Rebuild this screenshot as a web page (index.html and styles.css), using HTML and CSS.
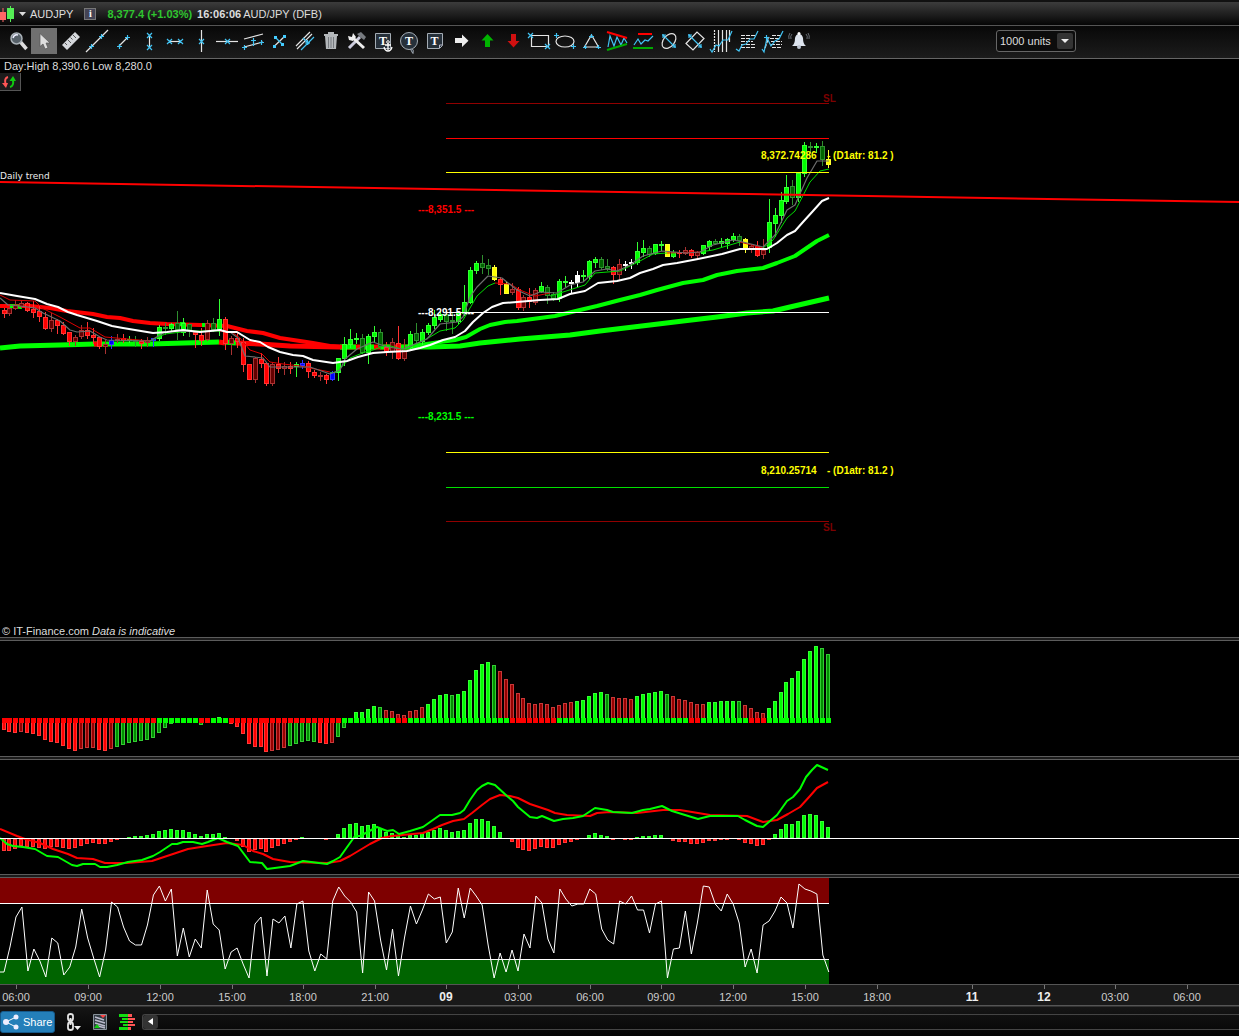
FILE: index.html
```html
<!DOCTYPE html>
<html lang="en">
<head>
    <meta charset="UTF-8">
    <meta name="viewport" content="width=device-width, initial-scale=1.0">
    <title>AUDJPY chart</title>
    <link rel="stylesheet" href="styles.css">
</head>
<body>
    <!-- Instrument header -->
    <header class="title-bar">
        <svg class="logo" width="15" height="20" viewBox="0 0 15 20">
            <path d="M3 4v14" stroke="#f66"/><rect x="0" y="8" width="6" height="8" fill="#f66"/>
            <path d="M10.500 2v16" stroke="#5e5"/><rect x="7" y="4" width="7" height="11" fill="#5e5"/>
        </svg>
        <svg class="caret" width="7" height="4" viewBox="0 0 7 4"><path d="M0 0h7L3.500 4z" fill="#ddd"/></svg>
        <span class="symbol">AUDJPY</span>
        <button class="info" aria-label="Information">i</button>
        <strong class="price">8,377.4 (+1.03%)</strong>
        <strong class="clock">16:06:06</strong>
        <span>AUD/JPY (DFB)</span>
    </header>

    <!-- Drawing tools -->
    <nav class="toolbar">
        <button class="tool" aria-label="Zoom"><svg viewBox="0 0 26 26"><path d="M15.500 14l6 7" stroke="#ddd" stroke-width="3.500"/><circle cx="11.500" cy="10.500" r="5.500" fill="#566068" stroke="#aab2b8" stroke-width="1.500"/><path d="M8 10q1-4 5-3" stroke="#eef" stroke-width="1.500"/></svg></button>
        <button class="tool active" aria-label="Select"><svg viewBox="0 0 26 26"><path d="M9 5.500v13l3-2.500 2 5 3-1-2-5h4z" fill="#ddd" stroke="#555" stroke-width=".7"/></svg></button>
        <button class="tool" aria-label="Measure"><svg viewBox="0 0 26 26"><path d="M5 17L18 4l5 5-13 13z" fill="#d5d8dc"/><path d="M8 15l2 2M11 12l3 3M13.500 9.500l2 2M16 7l3 3" stroke="#555"/></svg></button>
        <button class="tool" aria-label="Line"><svg viewBox="0 0 26 26"><path class="w" d="M3 24L25 2"/><path class="c" d="M6 18.500h5M8.500 16v5M16 8.500h5M18.500 6v5"/></svg></button>
        <button class="tool" aria-label="Segment"><svg viewBox="0 0 26 26"><path class="w" d="M10 18l9-9"/><path class="c" d="M8 18.500h5M10.500 16v5M16 9.500h5M18.500 7v5"/></svg></button>
        <button class="tool" aria-label="Vertical segment"><svg viewBox="0 0 26 26"><path class="w" d="M14.500 7v13"/><path class="c" d="M12 5l5 5M17 5l-5 5M12 17l5 5M17 17l-5 5"/></svg></button>
        <button class="tool" aria-label="Horizontal segment"><svg viewBox="0 0 26 26"><path class="w" d="M8 13.500h12"/><path class="c" d="M6 11l5 5M11 11l-5 5M17 11l5 5M22 11l-5 5"/></svg></button>
        <button class="tool" aria-label="Vertical line"><svg viewBox="0 0 26 26"><path class="w" d="M14.500 2v22"/><path class="c" d="M12 11l5 5M17 11l-5 5"/></svg></button>
        <button class="tool" aria-label="Horizontal line"><svg viewBox="0 0 26 26"><path class="w" d="M3 13.500h22"/><path class="c" d="M12 11l5 5M17 11l-5 5"/></svg></button>
        <button class="tool" aria-label="Channel"><svg viewBox="0 0 26 26"><path class="w" d="M5 11l19-5M5 19l19-5"/><path class="c" d="M3 19.500h5M5.500 17v5M20 14.500h5M22.500 12v5M14.500 10v8M12 12.500h5"/></svg></button>
        <button class="tool" aria-label="Perpendicular"><svg viewBox="0 0 26 26"><path class="w" d="M9 18.500L20 8"/><path class="c" d="M10 9l8 8"/><path d="M8 17h3v3H8zM18 7h3v3h-3zM9 8h3v3H9zM16 15h3v3h-3z" fill="#4cf"/></svg></button>
        <button class="tool" aria-label="Parallels"><svg viewBox="0 0 26 26"><path class="w" d="M5 18L19 4M6 21L21 6"/><path class="c" d="M10 22L23 9M12 10l6 6M14 15h5M16.500 12v5"/></svg></button>
        <button class="tool" aria-label="Delete"><svg viewBox="0 0 26 26"><path d="M8 8h12l-1 13H9zM7 6h14v2H7zM11 4h6v2h-6z" fill="#b4b8bb"/><path d="M11.500 9v11M14 9v11M16.500 9v11" stroke="#777b80"/></svg></button>
        <button class="tool" aria-label="Settings"><svg viewBox="0 0 26 26"><path d="M6 20L17 9" stroke="#ccd" stroke-width="3"/><path d="M9 9l12 11" stroke="#eee" stroke-width="3"/><path d="M5 8l4 1 1-4 3 4-3 4-4-1z" fill="#eee"/><path d="M14 6l4-2 5 5-2 3-4-3z" fill="#777b80"/></svg></button>
        <button class="tool" aria-label="Anchored text"><svg viewBox="0 0 26 26"><path class="box" d="M6.500 5.500h15v15h-15z"/><text class="t" x="14" y="17">T</text><path d="M19 14v8M16 17h6M15 19q1 4 4 4t4-4" stroke="#fff" stroke-width="1.300"/><circle cx="19" cy="14" r="1.300" fill="#222" stroke="#fff"/></svg></button>
        <button class="tool" aria-label="Bubble"><svg viewBox="0 0 26 26"><path class="box" d="M17 20.500q2 1 1 5-1-1-2.500-4.500"/><circle class="box" cx="14" cy="13" r="8.500"/><text class="t" x="14" y="17">T</text></svg></button>
        <button class="tool" aria-label="Note"><svg viewBox="0 0 26 26"><path class="box" d="M6.500 5.500h15v12l-3 3h-12z"/><path d="M18.500 20v-3h3" stroke="#bbc"/><text class="t" x="13.500" y="17">T</text></svg></button>
        <button class="tool" aria-label="Right arrow"><svg viewBox="0 0 26 26"><path d="M8 10h7V6.500l6.500 6.200-6.500 6.200V15H8z" fill="#eee"/></svg></button>
        <button class="tool" aria-label="Up arrow"><svg viewBox="0 0 26 26"><path d="M14.500 6l6 6.500h-3.500V19h-5v-6.500H8.500z" fill="#00b400"/></svg></button>
        <button class="tool" aria-label="Down arrow"><svg viewBox="0 0 26 26"><path d="M14.500 19.500l6-6.500h-3.500V6h-5v7H8.500z" fill="#d01010"/></svg></button>
        <button class="tool" aria-label="Rectangle"><svg viewBox="0 0 26 26"><path class="w" d="M6.500 7.500h17v11h-17z"/><path class="c" d="M3 5l5 5M8 5l-5 5M20 16l5 5M25 16l-5 5"/></svg></button>
        <button class="tool" aria-label="Ellipse"><svg viewBox="0 0 26 26"><ellipse class="w" cx="14" cy="13.500" rx="9" ry="5.500"/><path class="c" d="M3 7.500h5M5.500 5v5M20 18.500h5M22.500 16v5"/></svg></button>
        <button class="tool" aria-label="Triangle"><svg viewBox="0 0 26 26"><path class="w" d="M14.500 7l7 12h-14z"/><path class="c" d="M12 8.500h5M14.500 6v4M6 19.500h4M8.500 17v4M19 19.500h5M21.500 17v4"/></svg></button>
        <button class="tool" aria-label="Pattern"><svg viewBox="0 0 26 26"><path class="c" d="M5 19l2-11 4 10 3-9 4 8 3-7 3 5"/><path class="red" d="M4 4l20 6"/><path class="green" d="M4 22l20-6"/></svg></button>
        <button class="tool" aria-label="Support and resistance"><svg viewBox="0 0 26 26"><path class="c" d="M5 17l4-6 3 5 4-4 3 1 5-5"/><path class="red" d="M9 6h14"/><path class="green" d="M4 20h20"/></svg></button>
        <button class="tool" aria-label="Rotated ellipse"><svg viewBox="0 0 26 26"><ellipse class="w" cx="14" cy="13" rx="8.500" ry="5.500" transform="rotate(-50 14 13)"/><path class="c" d="M8 7l12 12M7 7h4M8 6v4M17 19h4M20 16v4"/></svg></button>
        <button class="tool" aria-label="Rotated rectangle"><svg viewBox="0 0 26 26"><path class="w" d="M5 15.500L16 4l7 6.500L12 22z"/><path class="c" d="M8 7l12 12M7 7h4M8 6v4M17 19h4M20 16v4"/></svg></button>
        <button class="tool" aria-label="Time cycles"><svg viewBox="0 0 26 26"><path class="w" d="M7.500 2v22" stroke-dasharray="2 1"/><path class="w" d="M11.500 2v22M15.500 2v22M19.500 2v22M22.500 2v12"/><path class="c" d="M3 21l2 3 4-7 3 1 4-6 5 0 4-9"/></svg></button>
        <button class="tool" aria-label="Retracements"><svg viewBox="0 0 26 26"><path class="w" d="M8 7.500h14M8 10.500h10M8 13.500h12M8 16.500h14M8 19.500h14" stroke-dasharray="4 1"/><path class="c" d="M3 21l3 2 3-6 4-1 4-5 4 0 4-8"/></svg></button>
        <button class="tool" aria-label="Extensions"><svg viewBox="0 0 26 26"><path class="w" d="M6 20l4-11M13 7.500h10M11 10.500h10M12 13.500h11M12 16.500h11M13 19.500h10" stroke-dasharray="4 1"/><path class="c" d="M3 21l2 3 3-14 4 8 4-5 4-2 4-8M5 9.500h5M7.500 7v5"/></svg></button>
        <button class="tool" aria-label="Alerts"><svg viewBox="0 0 26 26"><path d="M7 18q3-2 3-8 1-4 4-4t4 4q0 6 3 8z" fill="#dde4ee"/><circle cx="14" cy="19" r="2" fill="#bcc4d0"/><circle cx="14" cy="5.500" r="1.500" fill="#fff"/><path d="M7 6q-2 2-1 5M21 6q2 2 1 5M5 5q-2 3-1 6M23 5q2 3 1 6" stroke="#666c74"/></svg></button>
        <div class="units">
            <select aria-label="Units shown">
                <option>1000 units</option>
            </select>
            <svg class="units-arrow" width="16" height="16" viewBox="0 0 16 16"><path d="M4 6h8l-4 4z" fill="#eee"/></svg>
        </div>
    </nav>

    <!-- Chart panels, filled by chart.js -->
    <main>
        <section class="panel">
            <svg id="price" class="plot plot-price"></svg>
            <div class="panel-top">
                <span class="day-range">Day:High 8,390.6 Low 8,280.0</span>
                <button class="swap" aria-label="Buy or sell">
                    <svg width="16" height="14" viewBox="0 0 16 14"><path d="M7 2Q3 3 4.500 9" stroke="#f55" stroke-width="2"/><path d="M1 8h6l-2 5z" fill="#f55"/><path d="M9 12q4-1 3-7" stroke="#1c1" stroke-width="2"/><path d="M8.500 6h6.500l-3-5z" fill="#1c1"/></svg>
                </button>
            </div>
            <div class="copyright">© IT-Finance.com <em>Data is indicative</em></div>
        </section>
        <div class="divider"></div>
        <section class="panel"><svg id="histogram" class="plot plot-histogram"></svg></section>
        <div class="divider"></div>
        <section class="panel"><svg id="macd" class="plot plot-macd"></svg></section>
        <div class="divider"></div>
        <section class="panel"><svg id="stochastic" class="plot plot-stochastic"></svg></section>
        <svg id="axis" class="plot plot-axis"></svg>
    </main>

    <footer class="bottom-bar">
        <button class="share">
            <svg width="16" height="16" viewBox="0 0 16 16"><path d="M13 3L3 8l10 5" stroke="#fff"/><circle cx="13" cy="3" r="2.500" fill="#eef"/><circle cx="3" cy="8" r="3" fill="#eef"/><circle cx="13" cy="13" r="2.500" fill="#eef"/></svg>
            Share
        </button>
        <button class="icon" aria-label="Link"><svg width="16" height="18" viewBox="0 0 16 18"><path d="M3 6V3q0-2 2.500-2T8 3v3M3 5q0 3 2.500 3T8 5M3 12q0-3 2.500-3T8 12v3q0 2-2.500 2T3 15v-3M5.500 5v7" stroke="#e4e4e4" stroke-width="1.800"/><path d="M9 13h7l-3.500 4z" fill="#eee"/></svg></button>
        <button class="icon" aria-label="Orders list"><svg width="14" height="16" viewBox="0 0 14 16"><path d="M.5.5h13v15H.5z" fill="#333c44" stroke="#88929a"/><path d="M2 3l9 3M2 6l10 3M2 9l10 3M5 12l7 2" stroke="#bbc" stroke-width="1.500"/><path d="M7 1h6l-3 3z" fill="#f44"/><path d="M1 14l3-4 3 4z" fill="#1c1"/></svg></button>
        <button class="icon" aria-label="Order book"><svg width="16" height="16" viewBox="0 0 16 16"><path d="M0 0h9v3H0zM3 4h6v2H3zM1 7h8v2H1zM4 10h5v2H4zM0 13h9v3H0z" fill="#1d1"/><path d="M9 0h4v3H9zM9 4h7v2H9zM9 7h5v2H9zM9 10h7v2H9zM9 13h3v3H9z" fill="#f55"/></svg></button>
        <div class="scroller">
            <button class="scroll-left" aria-label="Scroll left"><svg width="5" height="7" viewBox="0 0 5 7"><path d="M5 0v7L0 3.500z" fill="#fff"/></svg></button>
        </div>
    </footer>
    <script src="chart.js"></script>
</body>
</html>
```
FILE: styles.css
```css
* {
    box-sizing: border-box;
}
body {
    margin: 0;
    min-height: 100vh;
    background: #000;
    color: #ddd;
    font: 11px/14px "Liberation Sans", Arial, sans-serif;
    overflow-x: hidden;
}
svg {
    display: block;
    fill: none;
}
button {
    margin: 0;
    padding: 0;
    border: 0;
    background: none;
    color: inherit;
    font: inherit;
}

/* header */
.title-bar {
    display: flex;
    align-items: center;
    height: 26px;
    border-top: 2px solid #111;
    border-bottom: 1px solid #555;
    background: linear-gradient(#3c3c3c, #050505);
    white-space: nowrap;
}
.caret {
    margin: 0 4px;
}
.info {
    width: 12px;
    height: 12px;
    margin: 0 11px;
    border: 1px solid #777;
    background: #445;
    color: #fff;
    font: bold 10px/10px "Liberation Serif", serif;
}
.price {
    color: #2fc52f;
    margin-right: 5px;
}
.clock {
    margin-right: 2px;
}

/* drawing tools */
.toolbar {
    display: flex;
    align-items: center;
    height: 33px;
    padding: 0 5px 2px;
    border-bottom: 1px solid #666;
    background: linear-gradient(#080808, #1c1c1c);
}
.tool {
    width: 26px;
    height: 26px;
    flex-shrink: 0;
}
.tool.active {
    background: #707070;
}
.tool .w {
    stroke: #e4e4e4;
    stroke-width: 1.2px;
}
.tool .c {
    stroke: #42c4f4;
    stroke-width: 1.2px;
}
.tool .red {
    stroke: #f00;
    stroke-width: 2px;
}
.tool .green {
    stroke: #0a0;
    stroke-width: 2px;
}
.tool .box {
    fill: #26303a;
    stroke: #a4acb4;
}
.tool .t {
    fill: #fff;
    font: bold 12px "Liberation Serif", serif;
    text-anchor: middle;
}
.units {
    position: relative;
    margin-left: 185px;
}
.units select {
    appearance: none;
    width: 80px;
    height: 22px;
    padding: 0 3px;
    border: 1px solid #666;
    border-radius: 3px;
    background: #0c0c0c;
    color: #ddd;
    font: inherit;
}
.units-arrow {
    position: absolute;
    top: 3px;
    right: 3px;
    background: #333;
    border-radius: 2px;
    pointer-events: none;
}

/* chart panels */
.panel {
    position: relative;
}
.plot {
    width: 100%;
}
.plot-price {
    height: 578px;
}
.plot-histogram {
    height: 115px;
}
.plot-macd {
    height: 114px;
}
.plot-stochastic {
    height: 106px;
}
.plot-axis {
    height: 22px;
    background: #191919;
    border-top: 1px solid #555;
    border-bottom: 1px solid #555;
}
.divider {
    height: 4px;
    border-top: 1px solid #5c5c5c;
    border-bottom: 1px solid #5c5c5c;
    background: #1b1b1b;
}
.panel-top {
    position: absolute;
    top: 0;
    left: 0;
}
.day-range {
    display: block;
    padding-left: 4px;
}
.swap {
    display: block;
    width: 21px;
    height: 18px;
    padding-left: 1px;
    border: solid #555;
    border-width: 0 1px 1px 0;
    background: #1c1c1c;
}
.copyright {
    position: absolute;
    bottom: 0;
    left: 2px;
    line-height: 12px;
}
.candle, .bars {
    shape-rendering: crispEdges;
}
.level-text {
    font: bold 10px "Liberation Sans", Arial, sans-serif;
}
.trend-text {
    font: 9px "DejaVu Sans", sans-serif;
    fill: #eee;
}
.axis-text {
    font: 11px "Liberation Sans", Arial, sans-serif;
    fill: #ccc;
    text-anchor: middle;
}
.axis-text.day {
    font-size: 12px;
    font-weight: bold;
    fill: #eee;
}

/* footer */
.bottom-bar {
    display: flex;
    align-items: center;
    height: 30px;
    background: linear-gradient(#151515, #050505);
    border-top: 1px solid #333;
}
.share {
    display: flex;
    align-items: center;
    gap: 4px;
    height: 22px;
    padding: 0 2px;
    margin-right: 10px;
    border: 1px solid #15598a;
    border-radius: 3px;
    background: #247fb9;
    color: #fff;
}
.icon {
    margin-right: 12px;
}
.scroller {
    flex: 1;
    margin-left: -5px;
    border: 1px solid #444;
    border-right: 0;
    border-radius: 3px 0 0 3px;
}
.scroll-left {
    display: flex;
    align-items: center;
    justify-content: center;
    width: 15px;
    height: 14px;
    border-radius: 3px;
    background: #333;
}
```
FILE: chart.js
```js
const NS = "http://www.w3.org/2000/svg";
const STEP = 5.977;
const LAST_X = 829;

// [fill, border]
const COLORS = {
    g: ["#00ff00", "#33ff33"],
    G: ["#006400", "#2f8f2f"],
    r: ["#ff0000", "#ff3333"],
    R: ["#640000", "#a83232"],
    y: ["#ffff00", "#ffff33"],
    w: ["#ffffff", "#ffffff"],
    b: ["#0000ff", "#3333ff"]
};

function add(parent, tag, attrs, text) {
    const el = document.createElementNS(NS, tag);
    for (const key in attrs) el.setAttribute(key, attrs[key]);
    if (text) el.textContent = text;
    parent.appendChild(el);
    return el;
}

// group whose y values count from the given window height
function plot(id, top) {
    return add(document.getElementById(id), "g", { transform: `translate(0,${-top})` });
}

function barX(i) {
    return Math.floor(4 + i * STEP);
}

function line(parent, points, color, width) {
    add(parent, "polyline", { points: points, stroke: color, "stroke-width": width, "stroke-linejoin": "round" });
}

function level(parent, x1, x2, y, color) {
    add(parent, "rect", { x: x1, y: y, width: x2 - x1, height: 1, fill: color });
}

// colour, high, body top, body bottom, low
const candles = `r308,310,313,317 R307,308,313,315 R300,305,308,309 R300,303,306,307 r302,303,310,311 r301,309,312,317
r306,311,316,321 r312,317,328,329 R313,320,328,331 r319,320,325,333 r322,325,333,334 r332,332,341,345 R335,337,341,345
R325,330,336,338 r322,330,335,338 r328,335,337,343 r337,337,346,348 R340,344,346,353 b336,340,344,348 R334,339,340,342
r334,338,340,342 g336,339,340,342 G336,340,341,346 r339,341,343,348 R337,340,342,346 b338,338,340,346 g325,327,338,340
G323,327,328,334 g323,324,328,330 G311,323,329,339 g318,323,332,335 G323,324,330,336 r331,332,334,347 r328,335,340,345
R320,323,339,340 G318,323,329,331 g299,319,329,335 r317,319,343,349 R336,338,343,354 r332,338,341,347 r338,342,364,371
r364,364,379,379 R357,358,379,382 r353,359,363,367 r362,363,383,385 R362,364,383,385 r357,364,368,372 R362,366,368,374
r362,366,368,373 g362,364,366,376 b360,363,365,368 r361,363,371,377 r370,372,375,377 R372,375,376,380 r374,375,379,383
b371,372,379,380 g358,358,372,380 g337,344,358,365 g329,339,344,347 g333,338,339,343 G334,338,352,353 g334,336,352,363
g326,332,336,341 G329,332,346,348 r342,347,351,355 R338,342,351,358 r326,343,358,359 R339,349,358,360 g331,334,347,350
G323,333,340,342 g329,332,341,344 g323,325,332,334 g310,317,325,328 g312,314,319,321 G313,314,321,330 G312,320,321,333
g311,313,321,323 g285,302,313,315 g267,270,302,303 g261,263,270,273 G255,263,267,273 G259,265,268,274 y265,267,279,280
r277,279,284,294 y282,284,293,293 R283,289,292,294 r287,289,307,309 R295,297,307,310 r288,297,301,307 R288,290,302,304
g282,286,291,292 G285,287,295,303 G292,294,298,300 g279,281,298,301 g276,281,282,286 w280,282,283,292 w271,275,282,286
g270,275,276,280 g260,261,276,279 g257,259,262,267 G257,259,267,269 G259,266,268,270 r266,267,274,283 R259,264,274,279
w261,264,265,270 w259,262,263,268 g242,251,262,264 g240,248,252,256 G246,248,254,256 g244,244,253,254 g241,244,245,250
y244,244,256,256 g250,252,256,257 r250,252,253,257 R247,250,253,254 r249,250,255,257 R251,252,255,258 g245,245,253,254
g240,241,246,250 G239,241,243,244 g238,241,243,246 g238,239,243,248 g233,236,239,241 G234,236,240,245 y238,239,249,252
R244,246,249,252 r241,246,255,256 R239,250,254,258 g199,222,247,252 g208,215,223,236 g192,200,215,222 g175,187,201,203
G180,186,197,204 g172,173,197,201 g142,145,173,176 G142,146,147,152 g143,146,147,152 G141,146,159,165 y150,159,164,167`;

function drawPrice() {
    const g = plot("price", 59);

    // slow average
    line(g, "0,348 20,346 60,345 95,344 150,344 219,342", "#0f0", 5);
    line(g, "94,344 102,344", "#f00", 5);
    line(g, "219,342 225,343", "#f00", 5);
    line(g, "225,342 236,343", "#0f0", 5);
    line(g, "236,343 260,344 290,346 340,347 408,347", "#f00", 5);
    line(g, "340,347 356,347", "#0f0", 5);
    line(g, "360,347 374,347", "#0f0", 5);
    line(g, "380,347 390,347", "#0f0", 5);
    line(g, "400,347 430,347 460,346 480,343 520,339 570,335 600,331 650,325 683,321 717,317 747,313 773,311 790,307 829,298", "#0f0", 5);
    // medium average
    line(g, "0,306 30,306 50,308 67,311 93,314 107,317 120,318 133,321 150,323 167,324 200,325 227,326 247,331 263,333 280,338 300,341 313,343 330,346 342,347", "#f00", 4);
    line(g, "10,306 22,307", "#0f0", 4);
    line(g, "180,324 185,324", "#0f0", 4);
    line(g, "202,325 207,325", "#0f0", 4);
    line(g, "407,347 420,345 440,342 455,340 466,337 480,329 490,325 505,322 517,321 540,318 555,316 580,310 597,306 620,300 640,295 657,290 683,283 703,280 717,275 737,271 763,268 777,263 795,256 817,241 829,235", "#0f0", 4);

    candles.split(/\s+/).forEach((item, i) => {
        const [fill, border] = COLORS[item[0]];
        const [high, top, bottom, low] = item.slice(1).split(",").map(Number);
        const x = barX(i);
        const c = add(g, "g", { class: "candle" });
        add(c, "rect", { x: x, y: high, width: 1, height: low - high + 1, fill: border });
        add(c, "rect", { x: x - 2, y: top, width: 5, height: bottom - top + 1, fill: border });
        if (bottom - top > 1) {
            add(c, "rect", { x: x - 1, y: top + 1, width: 3, height: bottom - top - 1, fill: fill });
        }
    });

    // fast averages
    line(g, "0,295 10,300 35,301 42,308 60,317 80,328 90,328 105,337 150,341", "#d00", 1);
    line(g, "150,341 165,334 190,331 220,331", "#0d0", 1);
    line(g, "220,331 232,332 240,338 250,350 262,354 270,362 283,364 300,366 330,372", "#d00", 1);
    line(g, "330,373 337,372 350,358 365,352 373,350 387,345 405,350 430,337 440,331 455,328 463,320 470,308 477,296 488,286 495,283", "#0d0", 1);
    line(g, "495,283 510,284 520,290 535,296 550,293", "#d00", 1);
    line(g, "550,296 560,293 585,285 595,273 620,271 640,261 653,254 667,253", "#0d0", 1);
    line(g, "667,253 700,252", "#d00", 1);
    line(g, "700,252 713,250 740,242", "#0d0", 1);
    line(g, "740,242 763,248", "#d00", 1);
    line(g, "763,248 773,240 787,218 795,211 810,182 820,171 829,169", "#0d0", 1);
    line(g, "0,298 8,305 20,306 35,308 43,313 60,321 70,330 77,332 90,331 100,337 107,340 150,341 165,332 180,331 197,332 220,330 230,332 238,338 245,356 263,358 270,367 310,367 330,374 340,370 345,359 357,349 373,342 387,347 403,349 427,339 440,324 457,322 463,317 470,297 477,287 488,276 502,278 517,290 530,296 540,292 557,293 570,285 583,282 595,271 607,269 617,271 630,265 643,256 662,251 687,253 700,252 713,245 733,240 743,242 763,247 775,235 787,210 795,205 807,178 817,161 829,161", "#6e6e6e", 1.2);
    line(g, "0,293 17,296 35,299 47,304 58,307 68,312 77,315 87,318 97,321 112,326 123,328 135,330 153,333 167,332 183,330 200,332 220,330 227,332 237,332 250,340 260,342 268,347 280,352 293,355 303,356 313,360 333,363 347,361 358,357 373,353 387,352 407,351 420,348 430,345 443,340 455,337 465,331 473,322 483,313 492,307 503,303 517,302 540,300 558,299 570,294 585,291 598,283 617,281 630,278 640,273 653,269 663,265 677,263 698,259 722,254 740,249 767,249 777,243 787,235 795,231 803,222 813,211 822,201 829,198", "#fff", 2);
    line(g, "0,182 620,192 1239,202", "#f00", 2);

    // levels
    level(g, 446, LAST_X, 103, "#900000");
    level(g, 446, LAST_X, 138, "#ff0000");
    level(g, 446, LAST_X, 172, "#ffff00");
    level(g, 446, LAST_X, 312, "#ffffff");
    level(g, 446, LAST_X, 452, "#ffff00");
    level(g, 446, LAST_X, 487, "#00e000");
    level(g, 446, LAST_X, 521, "#900000");

    const labels = [
        [823, 102, "SL", "#7c0000"],
        [823, 531, "SL", "#7c0000"],
        [761, 159, "8,372.74286", "#ff0"],
        [827, 159, "- (D1atr: 81.2 )", "#ff0"],
        [761, 474, "8,210.25714", "#ff0"],
        [827, 474, "- (D1atr: 81.2 )", "#ff0"],
        [418, 213, "---8,351.5 ---", "#f00"],
        [418, 316, "---8,291.5 ---", "#fff"],
        [418, 420, "---8,231.5 ---", "#0f0"]
    ];
    labels.forEach(([x, y, text, color]) => add(g, "text", { x: x, y: y, fill: color, class: "level-text" }, text));
    add(g, "text", { x: 0, y: 179, class: "trend-text" }, "Daily trend");
}

// colour and the far end of every bar; "-" leaves the slot empty
const momentum = `r730 r732 r733 R732 r733 r734 r736 r740 r742 r743 r746 r749 r751 R749 R748 R748 r750 r751 R749
G747 G745 G743 G742 G741 G740 G738 G733 G728 G724 - - - - G725 - - g717 - r724 r727 r734 r744 r747 r747 r752
R751 R750 R748 G746 G744 G742 G741 G742 r743 r744 R743 G737 G728 -
g712 g712 g709 g706 G707 R710 R711 R714 R715 R711 R710 R707 g704 g699 g695 g694 G695 g694 g691 g680 g670 g664 g662
G665 R671 R679 R684 R693 R698 R703 R704 R703 R704 R707 R705 R703 R702 g701 g700 g696 g693 g692 G694 R697 R698 R698
R699 g696 g694 g693 g692 g691 G694 R696 R699 R700 R702 R704 R704 g702 g702 g701 g701 g701 G701 R705 R708 R712 R713
g708 g701 g692 g682 g678 g671 g659 g651 g646 G648 G654`;
// state of the strip in the middle, run by run
const ribbon = [["r", 26], ["g", 7], ["r", 2], ["g", 3], ["r", 19], ["g", 9], ["r", 2], ["g", 17], ["r", 8],
    ["g", 22], ["r", 2], ["g", 8], ["r", 3], ["g", 11]];
const barFill = { g: "#00ff00", G: "#009000", r: "#ff0000", R: "#960000" };
const barBorder = { g: "#33ff33", G: "#33cc33", r: "#ff3838", R: "#c83838" };

function bar(parent, i, top, bottom, type) {
    const x = barX(i) - 2;
    add(parent, "rect", { x: x, y: top, width: 4, height: bottom - top, fill: barBorder[type] });
    if (bottom - top > 2) {
        add(parent, "rect", { x: x + 1, y: top + 1, width: 2, height: bottom - top - 2, fill: barFill[type] });
    }
}

function drawHistogram() {
    const g = plot("histogram", 641);
    g.setAttribute("class", "bars");
    momentum.split(/\s+/).forEach((item, i) => {
        if (item === "-") return;
        const end = Number(item.slice(1));
        if (end < 720) bar(g, i, end, 719, item[0]);
        else bar(g, i, 722, end, item[0]);
    });
    let i = 0;
    ribbon.forEach(([type, count]) => {
        for (let n = 0; n < count; n++, i++) {
            add(g, "rect", { x: barX(i) - 2, y: 718, width: 5, height: 5, fill: barFill[type] });
        }
    });
}

const macdBars = [-12, -12, -10, -7, -8, -8, -9, -10, -8, -8, -9, -10, -9, -7, -5, -4, -5, -5, -3, -1, 0, 1, 2, 2, 3, 4,
    7, 8, 9, 8, 8, 6, 4, 2, 4, 4, 5, 1, 0, -2, -8, -13, -11, -10, -13, -9, -7, -5, -3, -1, 1, 0, 0, 0, -1, 0, 4, 10, 14,
    15, 12, 13, 14, 10, 6, 5, 3, 1, 3, 3, 5, 6, 8, 10, 8, 6, 7, 8, 15, 19, 19, 17, 12, 6, 0, -3, -9, -11, -12, -10, -8,
    -9, -9, -6, -4, -3, -1, 0, 3, 5, 3, 2, -1, 0, -1, -1, 1, 2, 2, 3, 3, 0, -2, -3, -3, -5, -5, -4, -2, -2, -1, -1, 0,
    -1, -4, -5, -7, -6, -1, 4, 9, 14, 14, 17, 23, 24, 23, 17, 11];

function drawMacd() {
    const g = plot("macd", 760);
    const bars = add(g, "g", { class: "bars" });
    macdBars.forEach((v, i) => {
        if (v > 0) bar(bars, i, 838 - v, 838, "g");
        if (v < 0) bar(bars, i, 839, 839 - v, "r");
    });
    line(g, "0,829 17,836 25,839 40,843 53,849 68,854 77,858 93,859 105,863 127,863 152,861 167,856 188,849 207,846 227,843 243,845 253,851 263,854 273,859 290,862 327,863 340,861 350,856 360,850 370,844 382,838 392,836 423,833 433,829 442,825 453,821 464,819 472,813 482,805 490,799 500,795 510,796 518,798 530,804 548,810 555,813 567,815 590,816 597,813 610,812 637,813 663,810 680,810 710,815 747,816 763,822 777,820 788,814 800,807 810,796 817,788 828,782", "#f00", 2);
    line(g, "0,838 7,844 13,846 23,847 35,849 47,856 58,857 72,865 77,866 83,864 95,864 100,867 107,867 117,865 128,862 142,860 153,856 160,852 172,844 177,844 183,842 193,842 202,844 208,842 218,838 227,842 238,846 250,862 262,863 267,869 290,866 303,861 327,864 333,861 340,857 355,836 360,836 377,827 387,831 393,830 399,834 410,831 423,827 440,815 452,815 460,813 464,810 470,800 477,790 482,786 488,783 495,785 507,796 513,801 518,807 530,817 537,818 542,816 554,821 563,819 573,818 583,816 595,808 607,810 613,812 632,813 643,810 650,809 662,806 672,811 698,819 710,816 738,816 745,820 757,826 763,827 777,815 787,801 793,797 800,789 806,777 812,770 817,765 828,770", "#0f0", 2);
    level(g, 0, 4000, 838, "#fff");
}

const stochastic = [94, 69, 39, 29, 93, 71, 83, 99, 60, 65, 97, 89, 69, 31, 60, 80, 99, 72, 24, 29, 49, 63, 67, 67, 47,
    17, 8, 23, 11, 78, 50, 79, 61, 70, 12, 46, 52, 91, 74, 70, 86, 100, 46, 39, 98, 41, 45, 38, 70, 26, 23, 73, 93, 76,
    81, 23, 9, 18, 24, 34, 95, 14, 23, 62, 92, 51, 98, 60, 28, 46, 32, 16, 21, 19, 65, 54, 10, 40, 10, 18, 27, 67, 100,
    75, 94, 72, 93, 56, 70, 18, 25, 61, 75, 11, 21, 28, 26, 26, 11, 16, 51, 62, 66, 23, 26, 18, 32, 32, 55, 26, 23, 100,
    71, 70, 33, 76, 45, 8, 9, 26, 33, 16, 26, 45, 89, 71, 95, 47, 43, 33, 19, 25, 50, 6, 11, 13, 16, 77, 94];

function drawStochastic() {
    const g = plot("stochastic", 0);
    add(g, "rect", { x: 0, y: 0, width: LAST_X, height: 25, fill: "#7e0000" });
    add(g, "rect", { x: 0, y: 82, width: LAST_X, height: 24, fill: "#006400" });
    level(g, 0, LAST_X, 25, "#fff");
    level(g, 0, LAST_X, 81, "#fff");
    const points = stochastic.map((v, i) => `${4 + i * STEP},${v}`);
    line(g, "0,94 " + points.join(" "), "#fff", 1);
}

const ticks = [[16, "06:00"], [88, "09:00"], [160, "12:00"], [232, "15:00"], [303, "18:00"], [375, "21:00"], [446, "09"],
    [518, "03:00"], [590, "06:00"], [661, "09:00"], [733, "12:00"], [805, "15:00"], [877, "18:00"], [972, "11"],
    [1044, "12"], [1115, "03:00"], [1187, "06:00"]];

function drawAxis() {
    const g = plot("axis", 0);
    ticks.forEach(([x, text]) => {
        const isDay = text.length === 2;
        add(g, "rect", { x: x, y: 0, width: 1, height: 4, fill: "#777" });
        add(g, "text", { x: x, y: 16, class: isDay ? "axis-text day" : "axis-text" }, text);
    });
}

drawPrice();
drawHistogram();
drawMacd();
drawStochastic();
drawAxis();
```
